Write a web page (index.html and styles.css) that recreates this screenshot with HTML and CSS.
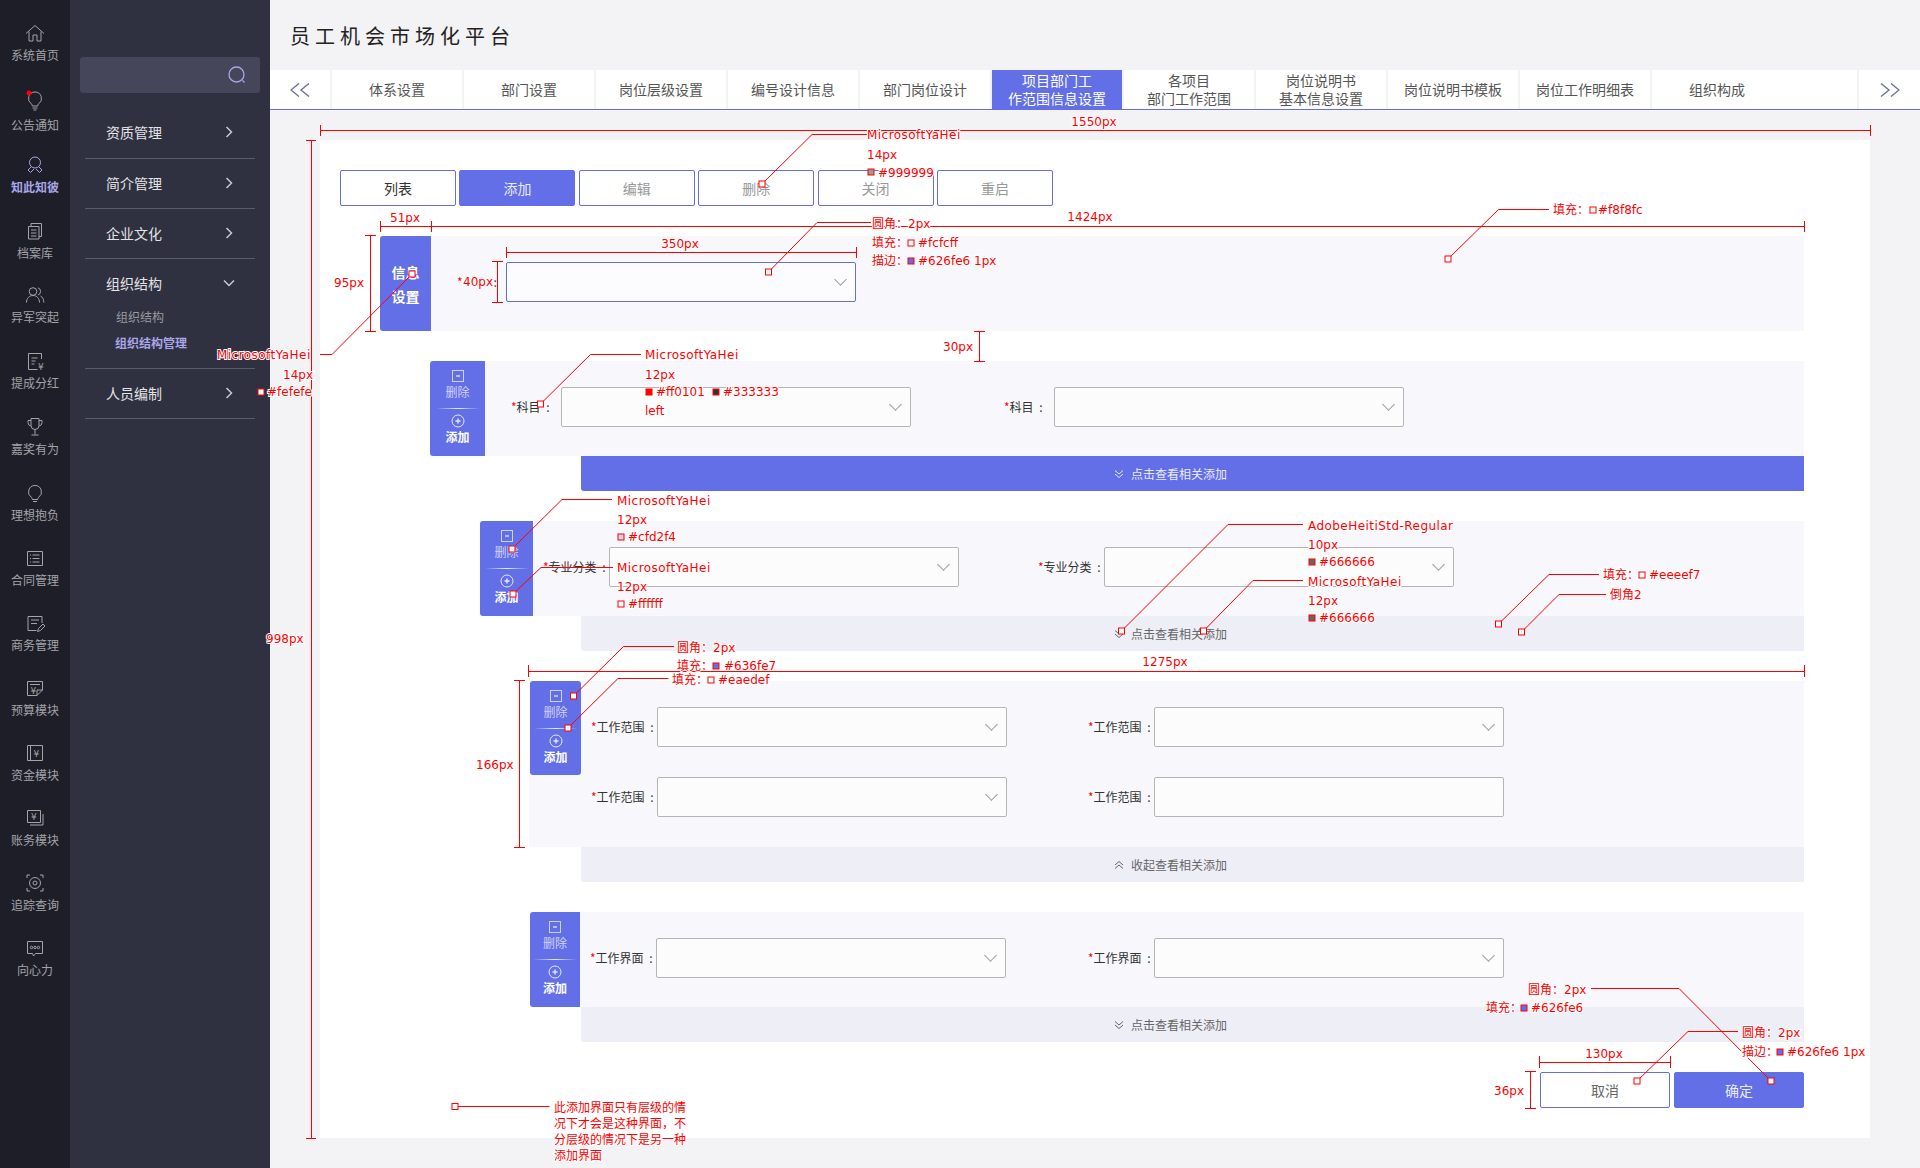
FILE: index.html
```html
<!DOCTYPE html>
<html lang="zh-CN">
<head>
    <meta charset="UTF-8">
    <title>员工机会市场化平台</title>
    <link rel="stylesheet" href="styles.css">
</head>
<body>
    <svg class="sprite" width="0" height="0">
        <symbol id="i-minus" viewBox="0 0 14 14"><rect x="1.5" y="1.5" width="11" height="11"/><path d="M5 7h4" stroke-width="1.6"/></symbol>
        <symbol id="i-plus" viewBox="0 0 14 14"><circle cx="7" cy="7" r="6"/><path d="M4.5 7h5M7 4.5v5" stroke-width="1.4"/></symbol>
        <symbol id="i-right" viewBox="0 0 12 12"><path d="M3.5 1 8.5 6l-5 5"/></symbol>
        <symbol id="i-down" viewBox="0 0 12 12"><path d="M1 3.5 6 8.5l5-5"/></symbol>
        <symbol id="i-dbl-down" viewBox="0 0 10 10"><path d="M1 1.5 5 5l4-3.5M1 5 5 8.5 9 5"/></symbol>
        <symbol id="i-dbl-up" viewBox="0 0 10 10"><path d="M1 5 5 1.5 9 5M1 8.5 5 5l4 3.5"/></symbol>
        <symbol id="i-dbl-left" viewBox="0 0 20 14"><path d="M9 .5 1 7l8 6.5M19 .5 11 7l8 6.5"/></symbol>
        <symbol id="i-dbl-right" viewBox="0 0 20 14"><path d="M1 .5 9 7l-8 6.5M11 .5 19 7l-8 6.5"/></symbol>
    </svg>

    <div class="app">
        <nav class="rail">
            <a class="rail-item">
                <svg class="rail-icon" viewBox="0 0 24 24"><path d="M3 12.5 12 4.5l9 8M6 10.5V20h4v-6h4v6h4v-9.5"/></svg>
                <span>系统首页</span>
            </a>
            <a class="rail-item">
                <svg class="rail-icon" viewBox="0 0 24 24"><path d="M12 1a6.5 6.5 0 0 0-3.6 11.9c.6.5.9 1.2.9 2.1h5.4c0-.9.3-1.6.9-2.1A6.5 6.5 0 0 0 12 1zM9.5 17h5M10.5 19h3"/><circle class="dot" cx="6" cy="2" r="2.5"/></svg>
                <span>公告通知</span>
            </a>
            <a class="rail-item active">
                <svg class="rail-icon" viewBox="0 0 24 24"><circle cx="12" cy="9.500" r="5.500"/><path d="M8 14 5 17l2.500 2.500L10 17l1-1M16 14l3 3-2.500 2.500L14 17l-1-1"/></svg>
                <span>知此知彼</span>
            </a>
            <a class="rail-item">
                <svg class="rail-icon" viewBox="0 0 24 24"><path d="M5.500 7.500h10.500v12.500H5.500zM8 7.500V4.500h10.500v13H16M8 11h5.500M8 14h5.500M8 17h5.500"/></svg>
                <span>档案库</span>
            </a>
            <a class="rail-item">
                <svg class="rail-icon" viewBox="0 0 24 24"><circle cx="10" cy="8.500" r="3.800"/><path d="M3.500 19.500c0-4.200 2.800-7 6.500-7s6.500 2.800 6.500 7M15 4.800a3.800 3.800 0 0 1 0 7.200M17.500 13c2 1 3.300 3.300 3.300 6.500"/></svg>
                <span>异军突起</span>
            </a>
            <a class="rail-item">
                <svg class="rail-icon" viewBox="0 0 24 24"><path d="M18.500 10V4.500h-13v16h9M8.500 9h6M8.500 12h4M8.500 15h3"/><text class="yen" x="15" y="21">¥</text></svg>
                <span>提成分红</span>
            </a>
            <a class="rail-item">
                <svg class="rail-icon" viewBox="0 0 24 24"><path d="M8 3.500h8v7a4 4 0 0 1-8 0zM8 5.500H5v2a3.500 3.500 0 0 0 3 3.500M16 5.500h3v2a3.500 3.500 0 0 1-3 3.500M12 14.500v5M8.500 20h7"/></svg>
                <span>嘉奖有为</span>
            </a>
            <a class="rail-item">
                <svg class="rail-icon" viewBox="0 0 24 24"><path d="M12 4.500a6.500 6.500 0 0 0-3.600 11.900c.6.500.9 1.200.9 2.100h5.400c0-.9.300-1.600.9-2.100A6.500 6.500 0 0 0 12 4.500zM10 20.500h4"/></svg>
                <span>理想抱负</span>
            </a>
            <a class="rail-item">
                <svg class="rail-icon" viewBox="0 0 24 24"><path d="M4.500 5.500h15v14h-15zM9.500 9h7M9.500 12.500h7M9.500 16h7M7 9h1M7 12.500h1M7 16h1"/></svg>
                <span>合同管理</span>
            </a>
            <a class="rail-item">
                <svg class="rail-icon" viewBox="0 0 24 24"><path d="M19 12V5.500H5v14h8.500M8 9h8M8 12.500h6M14.500 20.500l1-3 4.500-4.500 2 2-4.500 4.500z"/></svg>
                <span>商务管理</span>
            </a>
            <a class="rail-item">
                <svg class="rail-icon" viewBox="0 0 24 24"><path d="M4.500 5.500h15v8.500l-5.500 5.500h-9.500zM14 19.500v-5.500h5.500M7 8.500h10"/><text class="yen" x="7.500" y="17.500">¥</text></svg>
                <span>预算模块</span>
            </a>
            <a class="rail-item">
                <svg class="rail-icon" viewBox="0 0 24 24"><path d="M4.500 4.500h15v15h-15zM7.500 4.500v15"/><text class="yen" x="10.500" y="15.500">¥</text></svg>
                <span>资金模块</span>
            </a>
            <a class="rail-item">
                <svg class="rail-icon" viewBox="0 0 24 24"><path d="M4.500 4.500h13v12h-13zM20 8v11H7"/><text class="yen" x="8" y="13.500">¥</text></svg>
                <span>账务模块</span>
            </a>
            <a class="rail-item">
                <svg class="rail-icon" viewBox="0 0 24 24"><circle cx="12" cy="12" r="5.500"/><circle cx="12" cy="12" r="2"/><path d="M4 7V4h3M17 4h3v3M20 17v3h-3M7 20H4v-3"/></svg>
                <span>追踪查询</span>
            </a>
            <a class="rail-item">
                <svg class="rail-icon" viewBox="0 0 24 24"><path d="M4.500 5.500h15v12h-7l-2 2.500-1-2.500h-5z"/><circle cx="8.500" cy="11.500" r="1.200"/><circle cx="12" cy="11.500" r="1.200"/><circle cx="15.500" cy="11.500" r="1.200"/></svg>
                <span>向心力</span>
            </a>
        </nav>

        <aside class="panel">
            <div class="search">
                <svg class="search-icon" viewBox="0 0 18 18"><circle cx="8.500" cy="8.500" r="7.500"/><path d="M14.500 14.500l2 2"/></svg>
            </div>
            <ul class="menu">
                <li class="menu-item"><div class="menu-row">资质管理<svg class="menu-arrow"><use href="#i-right"/></svg></div></li>
                <li class="menu-item"><div class="menu-row">简介管理<svg class="menu-arrow"><use href="#i-right"/></svg></div></li>
                <li class="menu-item"><div class="menu-row">企业文化<svg class="menu-arrow"><use href="#i-right"/></svg></div></li>
                <li class="menu-item">
                    <div class="menu-row">组织结构<svg class="menu-arrow"><use href="#i-down"/></svg></div>
                    <ul class="submenu">
                        <li>组织结构</li>
                        <li class="current">组织结构管理</li>
                    </ul>
                </li>
                <li class="menu-item"><div class="menu-row">人员编制<svg class="menu-arrow"><use href="#i-right"/></svg></div></li>
            </ul>
        </aside>

        <main class="main">
            <header class="title">员工机会市场化平台</header>

            <div class="tabs">
                <a class="tab-arrow"><svg class="tab-arrow-icon"><use href="#i-dbl-left"/></svg></a>
                <a class="tab">体系设置</a>
                <a class="tab">部门设置</a>
                <a class="tab">岗位层级设置</a>
                <a class="tab">编号设计信息</a>
                <a class="tab">部门岗位设计</a>
                <a class="tab active">项目部门工<br>作范围信息设置</a>
                <a class="tab">各项目<br>部门工作范围</a>
                <a class="tab">岗位说明书<br>基本信息设置</a>
                <a class="tab">岗位说明书模板</a>
                <a class="tab">岗位工作明细表</a>
                <a class="tab">组织构成</a>
                <div class="tab-fill"></div>
                <a class="tab-arrow"><svg class="tab-arrow-icon"><use href="#i-dbl-right"/></svg></a>
            </div>

            <div class="card">
                <div class="toolbar">
                    <button class="btn">列表</button>
                    <button class="btn primary">添加</button>
                    <button class="btn muted">编辑</button>
                    <button class="btn muted">删除</button>
                    <button class="btn muted">关闭</button>
                    <button class="btn muted">重启</button>
                </div>

                <section class="block lvl-1">
                    <div class="block-row">
                        <div class="tag tag-title">信息<br>设置</div>
                        <div class="fields">
                            <div class="field">
                                <span class="field-label"><i class="req">*</i><span class="label-hole"></span>:</span>
                                <div class="select focus"></div>
                            </div>
                        </div>
                    </div>
                </section>

                <section class="block lvl-2">
                    <div class="block-row">
                        <div class="tag">
                            <svg class="tag-icon"><use href="#i-minus"/></svg><span class="tag-del">删除</span>
                            <div class="tag-line"></div>
                            <svg class="tag-icon bright"><use href="#i-plus"/></svg><span class="tag-add">添加</span>
                        </div>
                        <div class="fields">
                            <div class="field"><span class="field-label"><i class="req">*</i>科目 :</span><div class="select"></div></div>
                            <div class="field"><span class="field-label"><i class="req">*</i>科目 :</span><div class="select"></div></div>
                        </div>
                    </div>
                    <div class="more on"><svg class="more-icon"><use href="#i-dbl-down"/></svg>点击查看相关添加</div>
                </section>

                <section class="block lvl-3">
                    <div class="block-row">
                        <div class="tag">
                            <svg class="tag-icon"><use href="#i-minus"/></svg><span class="tag-del">删除</span>
                            <div class="tag-line"></div>
                            <svg class="tag-icon bright"><use href="#i-plus"/></svg><span class="tag-add">添加</span>
                        </div>
                        <div class="fields">
                            <div class="field"><span class="field-label"><i class="req">*</i>专业分类 :</span><div class="select"></div></div>
                            <div class="field"><span class="field-label"><i class="req">*</i>专业分类 :</span><div class="select"></div></div>
                        </div>
                    </div>
                    <div class="more"><svg class="more-icon"><use href="#i-dbl-down"/></svg>点击查看相关添加</div>
                </section>

                <section class="block lvl-4">
                    <div class="block-row">
                        <div class="tag">
                            <svg class="tag-icon"><use href="#i-minus"/></svg><span class="tag-del">删除</span>
                            <div class="tag-line"></div>
                            <svg class="tag-icon bright"><use href="#i-plus"/></svg><span class="tag-add">添加</span>
                        </div>
                        <div class="fields">
                            <div class="field"><span class="field-label"><i class="req">*</i>工作范围 :</span><div class="select"></div></div>
                            <div class="field"><span class="field-label"><i class="req">*</i>工作范围 :</span><div class="select"></div></div>
                            <div class="field"><span class="field-label"><i class="req">*</i>工作范围 :</span><div class="select"></div></div>
                            <div class="field"><span class="field-label"><i class="req">*</i>工作范围 :</span><div class="select no-arrow"></div></div>
                        </div>
                    </div>
                    <div class="more"><svg class="more-icon"><use href="#i-dbl-up"/></svg>收起查看相关添加</div>
                </section>

                <section class="block lvl-5">
                    <div class="block-row">
                        <div class="tag">
                            <svg class="tag-icon"><use href="#i-minus"/></svg><span class="tag-del">删除</span>
                            <div class="tag-line"></div>
                            <svg class="tag-icon bright"><use href="#i-plus"/></svg><span class="tag-add">添加</span>
                        </div>
                        <div class="fields">
                            <div class="field"><span class="field-label"><i class="req">*</i>工作界面 :</span><div class="select"></div></div>
                            <div class="field"><span class="field-label"><i class="req">*</i>工作界面 :</span><div class="select"></div></div>
                        </div>
                    </div>
                    <div class="more"><svg class="more-icon"><use href="#i-dbl-down"/></svg>点击查看相关添加</div>
                </section>

                <div class="footer-btns">
                    <button class="btn wide">取消</button>
                    <button class="btn wide primary">确定</button>
                </div>
            </div>
        </main>
    </div>

    <!-- design spec markup drawn over the page -->
    <svg class="marks" width="1920" height="1168" viewBox="0 0 1920 1168">
        <g class="dim">
            <path d="M320.500 125v11M320.500 130.500H1870.500M1870.500 125v11"/>
            <path d="M306 140.500h10M311.500 140.500V1138.500M306 1138.500h10"/>
            <path d="M380.500 221v11M380.500 226.500H1805M431.500 221v11M1804.500 221v11"/>
            <path d="M365 235.500h11M370.500 235.500V331.500M365 331.500h11"/>
            <path d="M506.500 247v11M506.500 252.500H857M856.500 247v11"/>
            <path d="M492 261.500h11M497.500 261.500V302.500M492 302.500h11"/>
            <path d="M974 331.500h11M979.500 331.500V361.500M974 361.500h11"/>
            <path d="M528.500 665v12M528.500 671.500H1805M1804.500 665v12"/>
            <path d="M514 680.500h11M519.500 680.500V847.500M514 847.500h11"/>
            <path d="M1539.500 1056v12M1539.500 1062.500H1670M1670.500 1056v12"/>
            <path d="M1525 1071.500h11M1530.500 1071.500V1108.500M1525 1108.500h11"/>
        </g>

        <g class="leader">
            <path d="M762 184 812 134.500H867"/>
            <path d="M768.500 272 817 222.500H871"/>
            <path d="M1448 259 1498.500 209.500H1549"/>
            <path d="M412 274 332 354.500H320"/>
            <path d="M540.500 404 590.500 354.500H641"/>
            <path d="M512 549 562 499.500H612"/>
            <path d="M513 594 541 567.500H613"/>
            <path d="M1121.500 631 1228 524.500H1303"/>
            <path d="M1203.500 631 1253 580.500H1303"/>
            <path d="M1498.500 624 1549 574.500H1599"/>
            <path d="M1521.500 632 1559 594.500H1606"/>
            <path d="M573.500 696 623.500 646.500H674"/>
            <path d="M568 728 618 678.500H668.500"/>
            <path d="M455 1106.500H549.500"/>
            <path d="M1591 988.500H1679L1771 1081"/>
            <path d="M1637 1081 1688 1031.500H1738"/>
        </g>

        <g class="pin">
            <rect x="759" y="181" width="6" height="6"/>
            <rect x="765.500" y="269" width="6" height="6"/>
            <rect x="1445" y="256" width="6" height="6"/>
            <rect x="409" y="271" width="6" height="6"/>
            <rect x="537.500" y="401" width="6" height="6"/>
            <rect x="509" y="546" width="6" height="6"/>
            <rect x="510" y="591" width="6" height="6"/>
            <rect x="1118.500" y="628" width="6" height="6"/>
            <rect x="1200.500" y="628" width="6" height="6"/>
            <rect x="1495.500" y="621" width="6" height="6"/>
            <rect x="1518.500" y="629" width="6" height="6"/>
            <rect x="570.500" y="693" width="6" height="6"/>
            <rect x="565" y="725" width="6" height="6"/>
            <rect x="452" y="1103.500" width="6" height="6"/>
            <rect x="1768" y="1078" width="6" height="6"/>
            <rect x="1634" y="1078" width="6" height="6"/>
        </g>

        <g class="ann">
            <text x="1094" y="122" text-anchor="middle">1550px</text>
            <text x="266" y="639">998px</text>
            <text x="405" y="218" text-anchor="middle">51px</text>
            <text x="1090" y="217" text-anchor="middle">1424px</text>
            <text x="334" y="283">95px</text>
            <text x="680" y="244" text-anchor="middle">350px</text>
            <text x="463" y="282">40px</text>
            <text x="943" y="347">30px</text>
            <text x="1165" y="662" text-anchor="middle">1275px</text>
            <text x="476" y="765">166px</text>
            <text x="1604" y="1054" text-anchor="middle">130px</text>
            <text x="1494" y="1091">36px</text>

            <text class="long" x="867" y="135">MicrosoftYaHei</text>
            <text x="867" y="155">14px</text>
            <text x="878" y="173">#999999</text>
            <text x="872" y="224">圆角：2px</text>
            <text x="872" y="243">填充：</text>
            <text x="918" y="243">#fcfcff</text>
            <text x="872" y="261">描边：</text>
            <text x="918" y="261">#626fe6 1px</text>
            <text x="1553" y="210">填充：</text>
            <text x="1598" y="210">#f8f8fc</text>

            <text class="long" x="217" y="355">MicrosoftYaHei</text>
            <text x="283" y="375">14px</text>
            <text x="267" y="392">#fefefe</text>

            <text class="long" x="645" y="355">MicrosoftYaHei</text>
            <text x="645" y="375">12px</text>
            <text x="656" y="392">#ff0101</text>
            <text x="723" y="392">#333333</text>
            <text x="645" y="411">left</text>

            <text class="long" x="617" y="501">MicrosoftYaHei</text>
            <text x="617" y="520">12px</text>
            <text x="628" y="537">#cfd2f4</text>
            <text class="long" x="617" y="568">MicrosoftYaHei</text>
            <text x="617" y="587">12px</text>
            <text x="628" y="604">#ffffff</text>

            <text class="long" x="1308" y="526">AdobeHeitiStd-Regular</text>
            <text x="1308" y="545">10px</text>
            <text x="1319" y="562">#666666</text>
            <text class="long" x="1308" y="582">MicrosoftYaHei</text>
            <text x="1308" y="601">12px</text>
            <text x="1319" y="618">#666666</text>
            <text x="1603" y="575">填充：</text>
            <text x="1649" y="575">#eeeef7</text>
            <text x="1610" y="595">倒角2</text>

            <text x="677" y="648">圆角：2px</text>
            <text x="677" y="666">填充：</text>
            <text x="724" y="666">#636fe7</text>
            <text x="672" y="680">填充：</text>
            <text x="718" y="680">#eaedef</text>

            <text x="554" y="1108">此添加界面只有层级的情</text>
            <text x="554" y="1124">况下才会是这种界面，不</text>
            <text x="554" y="1140">分层级的情况下是另一种</text>
            <text x="554" y="1156">添加界面</text>

            <text x="1528" y="990">圆角：2px</text>
            <text x="1486" y="1008">填充：</text>
            <text x="1531" y="1008">#626fe6</text>
            <text x="1742" y="1033">圆角：2px</text>
            <text x="1742" y="1052">描边：</text>
            <text x="1787" y="1052">#626fe6 1px</text>
        </g>

        <g class="swatch">
            <rect class="s-999" x="868" y="169" width="6" height="6"/>
            <rect class="s-fff" x="908" y="240" width="6" height="6"/>
            <rect class="s-blue" x="908" y="258" width="6" height="6"/>
            <rect class="s-fff" x="1590" y="207" width="6" height="6"/>
            <rect class="s-fff" x="258" y="389" width="6" height="6"/>
            <rect class="s-red" x="646" y="389" width="6" height="6"/>
            <rect class="s-333" x="713" y="389" width="6" height="6"/>
            <rect class="s-pale" x="618" y="534" width="6" height="6"/>
            <rect class="s-fff" x="618" y="601" width="6" height="6"/>
            <rect class="s-666" x="1309" y="559" width="6" height="6"/>
            <rect class="s-666" x="1309" y="615" width="6" height="6"/>
            <rect class="s-fff" x="1639" y="572" width="6" height="6"/>
            <rect class="s-blue" x="713" y="663" width="6" height="6"/>
            <rect class="s-fff" x="708" y="677" width="6" height="6"/>
            <rect class="s-blue" x="1521" y="1005" width="6" height="6"/>
            <rect class="s-blue" x="1777" y="1049" width="6" height="6"/>
        </g>
    </svg>
</body>
</html>
```

FILE: styles.css
```css
* {
    box-sizing: border-box;
}
body {
    position: relative;
    margin: 0;
    width: 1920px;
    height: 1168px;
    overflow: hidden;
    background: #f3f3f6;
    font-family: "Noto Sans CJK SC", "Noto Sans", sans-serif;
    font-size: 12px;
    color: #333;
}
ul {
    list-style: none;
    margin: 0;
    padding: 0;
}
.sprite {
    position: absolute;
}
.sprite symbol {
    fill: none;
    stroke: currentColor;
}
.app {
    display: flex;
    height: 1168px;
}

/* icon rail */
.rail {
    width: 70px;
    flex: none;
    padding-top: 21px;
    background: #1e1e29;
}
.rail-item {
    display: flex;
    flex-direction: column;
    align-items: center;
    height: 65px;
    color: #a3a3a8;
    line-height: 16px;
}
.rail-item:nth-child(1) { height: 70px; }
.rail-item:nth-child(2) { height: 62px; }
.rail-item:nth-child(3) { height: 66px; }
.rail-item:nth-child(4) { height: 64px; }
.rail-item:nth-child(5),
.rail-item:nth-child(6),
.rail-item:nth-child(7) { height: 66px; }
.rail-icon {
    width: 24px;
    height: 24px;
    margin-bottom: 2px;
    fill: none;
    stroke: #a3a3a8;
    stroke-width: 1;
    overflow: visible;
}
.rail-icon .dot {
    fill: #ff0000;
    stroke: none;
}
.rail-icon .yen {
    fill: #a3a3a8;
    stroke: none;
    font-family: "DejaVu Sans", sans-serif;
    font-size: 9px;
}
.rail-item.active {
    color: #a8a6e8;
    font-weight: 700;
}
.rail-item.active .rail-icon {
    stroke: #a8a6e8;
}

/* menu panel */
.panel {
    width: 200px;
    flex: none;
    padding: 57px 10px 0;
    background: #2f3040;
}
.search {
    display: flex;
    align-items: center;
    justify-content: flex-end;
    height: 36px;
    padding-right: 14px;
    border-radius: 3px;
    background: #454659;
}
.search-icon {
    width: 18px;
    height: 18px;
    fill: none;
    stroke: #a8a6e8;
    stroke-width: 1.3;
}
.menu {
    margin: 15px 5px 0;
}
.menu-item {
    border-bottom: 1px solid #5c5c69;
}
.menu-row {
    display: flex;
    align-items: center;
    justify-content: space-between;
    height: 49px;
    padding: 0 20px 2px 21px;
    font-size: 14px;
    color: #e4e4e6;
}
.menu-item:first-child .menu-row {
    height: 50px;
}
.menu-arrow {
    width: 12px;
    height: 12px;
    color: #c9c9cf;
    fill: none;
    stroke: currentColor;
    stroke-width: 1.5;
}
.submenu {
    margin-top: -4px;
    padding: 0 0 12px 31px;
    color: #9a9a9f;
}
.submenu li {
    height: 26px;
    line-height: 26px;
}
.submenu .current {
    margin-left: -1px;
    color: #a8a6e8;
    font-weight: 700;
}

/* main area */
.main {
    flex: 1;
    min-width: 0;
}
.title {
    height: 70px;
    padding-left: 20px;
    font-size: 20px;
    line-height: 72px;
    letter-spacing: 5px;
    color: #222;
}
.tabs {
    display: flex;
    height: 40px;
    border-bottom: 1px solid #626fe6;
    background: #f3f3f6;
    font-size: 14px;
    line-height: 18px;
    color: #555;
}
.tab-arrow {
    display: flex;
    align-items: center;
    justify-content: center;
    width: 60px;
    margin-right: 2px;
    background: #fff;
    color: #6d7299;
}
.tab-arrow:last-child {
    width: 61px;
    margin-right: 0;
}
.tab-arrow-icon {
    width: 20px;
    height: 14px;
    fill: none;
    stroke: currentColor;
    stroke-width: 1.4;
}
.tab {
    display: flex;
    align-items: center;
    justify-content: center;
    width: 130px;
    margin-right: 2px;
    padding-bottom: 2px;
    background: #fff;
    text-align: center;
}
.tab.active {
    background: #626fe6;
    color: #fff;
}
.tab-fill {
    flex: 1;
    margin: 0 2px 0 -2px;
    background: #fff;
}

/* white sheet */
.card {
    width: 1550px;
    height: 998px;
    margin: 30px 0 0 50px;
    padding: 30px 66px 0 20px;
    background: #fff;
}
.toolbar {
    display: flex;
    gap: 3.4px;
}
.btn {
    width: 116px;
    height: 36px;
    padding: 0;
    border: 1px solid #626fe6;
    border-radius: 2px;
    background: #fff;
    font: 14px "Noto Sans CJK SC", sans-serif;
    color: #333;
}
.btn.primary {
    background: #626fe6;
    color: #e9ebfb;
}
.btn.muted {
    color: #999;
}
.btn.wide {
    width: 130px;
    color: #666;
}
.btn.wide.primary {
    color: #e9ebfb;
}
.footer-btns {
    display: flex;
    justify-content: flex-end;
    gap: 4px;
    margin-top: 30px;
}

/* form blocks */
.block {
    margin-top: 30px;
}
.block-row {
    display: flex;
    background: #f8f8fc;
}
.tag {
    display: flex;
    flex-direction: column;
    align-items: center;
    flex: none;
    height: 95px;
    padding-top: 8px;
    border-radius: 3px 0 0 3px;
    background: #626fe6;
    color: #fff;
}
.tag-title {
    justify-content: center;
    padding-top: 0;
    font-size: 14px;
    font-weight: 700;
    line-height: 24px;
    text-align: center;
    color: #fefefe;
}
.tag-icon {
    width: 14px;
    height: 14px;
    color: #cfd2f4;
    fill: none;
    stroke: currentColor;
}
.tag-icon.bright {
    color: #e6e8fb;
}
.tag-del {
    line-height: 18px;
    color: #cfd2f4;
}
.tag-add {
    line-height: 18px;
    font-weight: 700;
    color: #fff;
}
.tag-line {
    width: 44px;
    height: 1px;
    margin: 7px 0 5px;
    background: linear-gradient(90deg, #626fe6, #e9ebfb 50%, #626fe6);
}
.fields {
    display: grid;
    grid-template-columns: repeat(2, auto);
    justify-content: start;
    row-gap: 30px;
    padding-top: 26px;
    padding-bottom: 29px;
}
.field {
    display: flex;
    align-items: center;
    gap: 4px;
}
.field-label {
    line-height: 16px;
    white-space: nowrap;
    word-spacing: 3px;
}
.req {
    font-style: normal;
    color: #ff0101;
}
.label-hole {
    display: inline-block;
    width: 31px;
}
.select {
    position: relative;
    width: 350px;
    height: 40px;
    border: 1px solid #b5b5b5;
    border-radius: 2px;
    background: #fcfcfc;
}
.select::after {
    content: "";
    position: absolute;
    top: 12px;
    right: 10px;
    width: 8px;
    height: 8px;
    border-right: 1px solid #999;
    border-bottom: 1px solid #999;
    transform: rotate(45deg);
}
.select.no-arrow::after {
    display: none;
}
.select.focus {
    border-color: #626fe6;
    background: #fcfcff;
}
.more {
    display: flex;
    align-items: center;
    gap: 7px;
    height: 35px;
    padding-left: 533px;
    border-radius: 0 0 0 3px;
    background: #eeeef7;
    color: #666;
}
.more.on {
    background: #626fe6;
    color: #e9ebfb;
}
.more-icon {
    width: 10px;
    height: 10px;
    fill: none;
    stroke: currentColor;
}

/* block levels: each one steps further right */
.lvl-1 { margin-left: 40px; }
.lvl-1 .tag { width: 51px; }
.lvl-1 .fields { padding-left: 26px; }
.lvl-1 .field-label { width: 45px; word-spacing: 0; }

.lvl-2 { margin-left: 90px; }
.lvl-2 .tag { width: 55px; }
.lvl-2 .fields { padding-left: 24px; column-gap: 91px; }
.lvl-2 .field-label { width: 48px; padding-left: 2px; }
.lvl-2 .more { margin-left: 151px; }

.lvl-3 { margin-left: 140px; }
.lvl-3 .tag { width: 53px; }
.lvl-3 .fields { padding-left: 10px; column-gap: 79px; }
.lvl-3 .field-label { width: 62px; }
.lvl-3 .more { margin-left: 101px; }

.lvl-4 { margin-left: 189px; }
.lvl-4 .block-row { border-radius: 0 0 0 3px; padding-left: 1px; }
.lvl-4 .tag { width: 51px; height: 94px; border-radius: 3px; }
.lvl-4 .fields { padding: 26px 0 30px 10px; column-gap: 81px; }
.lvl-4 .field-label { width: 62px; }
.lvl-4 .more { margin-left: 52px; }

.lvl-5 { margin-left: 190px; }
.lvl-5 .tag { width: 50px; }
.lvl-5 .fields { padding-left: 10px; column-gap: 82px; }
.lvl-5 .field-label { width: 62px; }
.lvl-5 .more { margin-left: 51px; }

/* spec overlay */
.marks {
    position: absolute;
    top: 0;
    left: 0;
    pointer-events: none;
}
.dim path,
.leader path {
    fill: none;
    stroke: #ff0000;
    stroke-width: 1;
}
.pin rect {
    fill: #fff;
    stroke: #ff0000;
}
.ann text {
    font-family: "DejaVu Sans", "Noto Sans CJK SC", sans-serif;
    font-size: 12px;
    dominant-baseline: central;
    fill: #ff0000;
    stroke: #fff;
    stroke-width: 2;
    paint-order: stroke;
}
.ann .long {
    letter-spacing: .45px;
}
.swatch rect {
    stroke: #ff0000;
}
.s-999 { fill: #999; }
.s-fff { fill: #fff; }
.s-blue { fill: #626fe6; }
.s-red { fill: #ff0101; }
.s-333 { fill: #333; }
.s-666 { fill: #666; }
.s-pale { fill: #cfd2f4; }
```
